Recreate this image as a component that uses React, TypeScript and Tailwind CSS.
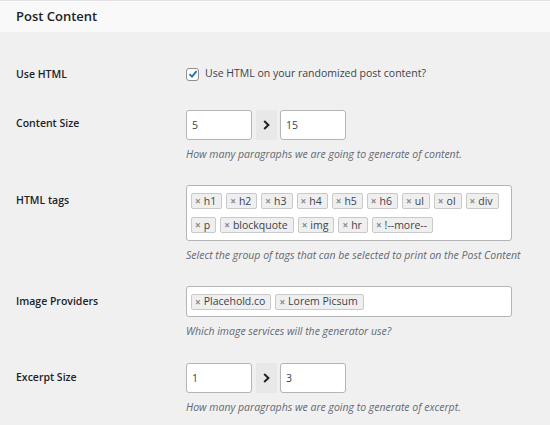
import React from 'react';

const htmlTags = ['h1', 'h2', 'h3', 'h4', 'h5', 'h6', 'ul', 'ol', 'div', 'p', 'blockquote', 'img', 'hr', '!--more--'];
const providers = ['Placehold.co', 'Lorem Picsum'];

const Tag = ({ label }: { label: string }) => (
  <span className="inline-flex items-center h-4 pl-[3px] pr-[5px] gap-[3px] bg-[#efefef] border border-[#c9c9c9] rounded-[2px] text-[10.5px] leading-none text-[#3c434a]">
    <span className="text-[10px] font-bold text-[#888b90]">×</span>
    {label}
  </span>
);

const Row = ({ label, labelPad, children, className }: { label: string; labelPad: string; children: React.ReactNode; className?: string }) => (
  <div className={`flex ${className ?? ''}`}>
    <div className={`w-[186px] shrink-0 pl-4 font-semibold text-[#1d2327] leading-4 ${labelPad}`}>{label}</div>
    <div className="flex-1 min-w-0 pr-[38px]">{children}</div>
  </div>
);

const Description = ({ children }: { children: React.ReactNode }) => (
  <p className="mt-[6px] italic text-[#646970] leading-4 whitespace-nowrap">{children}</p>
);

const NumberBox = ({ value }: { value: string }) => (
  <input
    defaultValue={value}
    className="w-[66px] h-[30px] pl-[5px] bg-white border border-[#b5b5b5] rounded-[3px] text-[10.5px] text-[#3c434a] outline-none"
  />
);

const RangeInputs = ({ min, max }: { min: string; max: string }) => (
  <div className="flex items-center">
    <NumberBox value={min} />
    <span className="w-[21px] h-[30px] ml-1 mr-[3px] flex items-center justify-center bg-[#e8e8e8] text-[#1d2327]">
      <svg width="7" height="10" viewBox="0 0 7 10">
        <path d="M1.2 1 L5.4 5 L1.2 9" fill="none" stroke="currentColor" strokeWidth="2" />
      </svg>
    </span>
    <NumberBox value={max} />
  </div>
);

const App: React.FC = () => {
  return (
    <div className="w-[550px] h-[425px] bg-[#f0f0f0] text-[10.5px] text-[#3c434a] font-['Open_Sans',sans-serif] overflow-hidden">
      <header className="h-[32px] bg-[#f9f9f9] border-t border-[#e2e2e2] flex items-center pl-4">
        <h1 className="text-[13px] font-semibold text-[#1d2327]">Post Content</h1>
      </header>

      <Row label="Use HTML" labelPad="pt-0" className="mt-[34px] items-center h-4">
        <label className="flex items-center gap-[6px]">
          <span className="w-[13px] h-[13px] bg-white border border-[#8c8f94] rounded-[3px] flex items-center justify-center text-[#2271b1]">
            <svg width="10" height="10" viewBox="0 0 10 10">
              <path d="M1.5 5.2 L4 7.6 L8.6 2.2" fill="none" stroke="currentColor" strokeWidth="1.8" />
            </svg>
          </span>
          Use HTML on your randomized post content?
        </label>
      </Row>

      <Row label="Content Size" labelPad="pt-[5px]" className="mt-[28px]">
        <RangeInputs min="5" max="15" />
        <Description>How many paragraphs we are going to generate of content.</Description>
      </Row>

      <Row label="HTML tags" labelPad="pt-[7px]" className="mt-[23px]">
        <div className="h-[56px] bg-white border border-[#b5b5b5] rounded-[3px] px-[4px] pt-[7px] flex flex-wrap content-start gap-x-[4px] gap-y-2">
          {htmlTags.map(t => <Tag key={t} label={t} />)}
        </div>
        <Description>Select the group of tags that can be selected to print on the Post Content</Description>
      </Row>

      <Row label="Image Providers" labelPad="pt-[7px]" className="mt-[23px]">
        <div className="h-[31px] bg-white border border-[#b5b5b5] rounded-[3px] px-[4px] pt-[6.5px] flex flex-wrap content-start gap-[4px]">
          {providers.map(p => <Tag key={p} label={p} />)}
        </div>
        <Description>Which image services will the generator use?</Description>
      </Row>

      <Row label="Excerpt Size" labelPad="pt-[6px]" className="mt-[24px]">
        <RangeInputs min="1" max="3" />
        <Description>How many paragraphs we are going to generate of excerpt.</Description>
      </Row>
    </div>
  );
};

export default App;
